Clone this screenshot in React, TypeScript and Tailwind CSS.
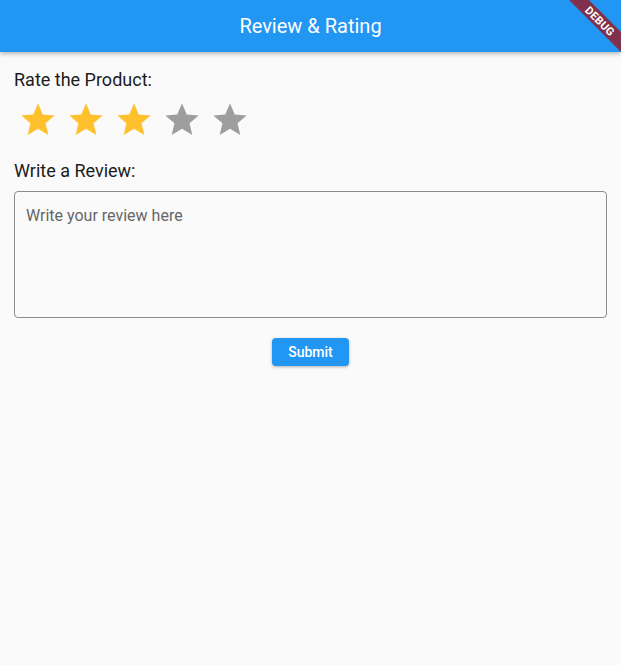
import React from "react";

const Star = ({ color }: { color: string }) => (
  <div className="w-12 h-12 flex items-center justify-center">
    <svg width="40" height="40" viewBox="0 0 24 24">
      <path
        fill={color}
        d="M12 17.27L18.18 21l-1.64-7.03L22 9.24l-7.19-.61L12 2 9.19 8.63 2 9.24l5.46 4.73L5.82 21z"
      />
    </svg>
  </div>
);

export default function App() {
  const rating = 3;
  return (
    <div
      className="relative w-[621px] h-[665px] overflow-hidden bg-[#fafafa]"
      style={{ fontFamily: "Roboto, 'Liberation Sans', sans-serif" }}
    >
      <header className="h-[52px] bg-[#2196f3] flex items-center justify-center shadow-[0_2px_4px_rgba(0,0,0,0.25)] relative z-10">
        <h1 className="text-white text-[20px] leading-none">Review &amp; Rating</h1>
      </header>

      <div className="absolute z-20 top-[21px] left-[600px] w-[110px] h-[14px] -translate-x-1/2 -translate-y-1/2 rotate-45 bg-[#80304a] flex items-center justify-center">
        <span className="text-white text-[11px] font-bold leading-none tracking-[0.3px]">DEBUG</span>
      </div>

      <main className="px-[14px] pt-[17px] flex flex-col">
        <p className="text-[18px] leading-[21px] text-[#1c1c1c]">Rate the Product:</p>
        <div className="flex mt-[6px]">
          {[1, 2, 3, 4, 5].map((i) => (
            <Star key={i} color={i <= rating ? "#ffc02d" : "#9e9e9e"} />
          ))}
        </div>
        <p className="mt-[16px] text-[18px] leading-[21px] text-[#1c1c1c]">Write a Review:</p>
        <textarea
          className="mt-[10px] h-[127px] w-full resize-none rounded-[4px] border border-[#8c8c8c] bg-transparent px-[11px] pt-[14px] text-[16px] leading-[19px] text-[#212121] placeholder:text-[#666666] outline-none"
          placeholder="Write your review here"
        />
        <div className="flex justify-center mt-[20px]">
          <button className="w-[77px] h-[28px] rounded-[4px] bg-[#2196f3] text-white text-[14px] font-medium shadow-[0_1px_3px_rgba(0,0,0,0.3)]">
            Submit
          </button>
        </div>
      </main>
    </div>
  );
}
